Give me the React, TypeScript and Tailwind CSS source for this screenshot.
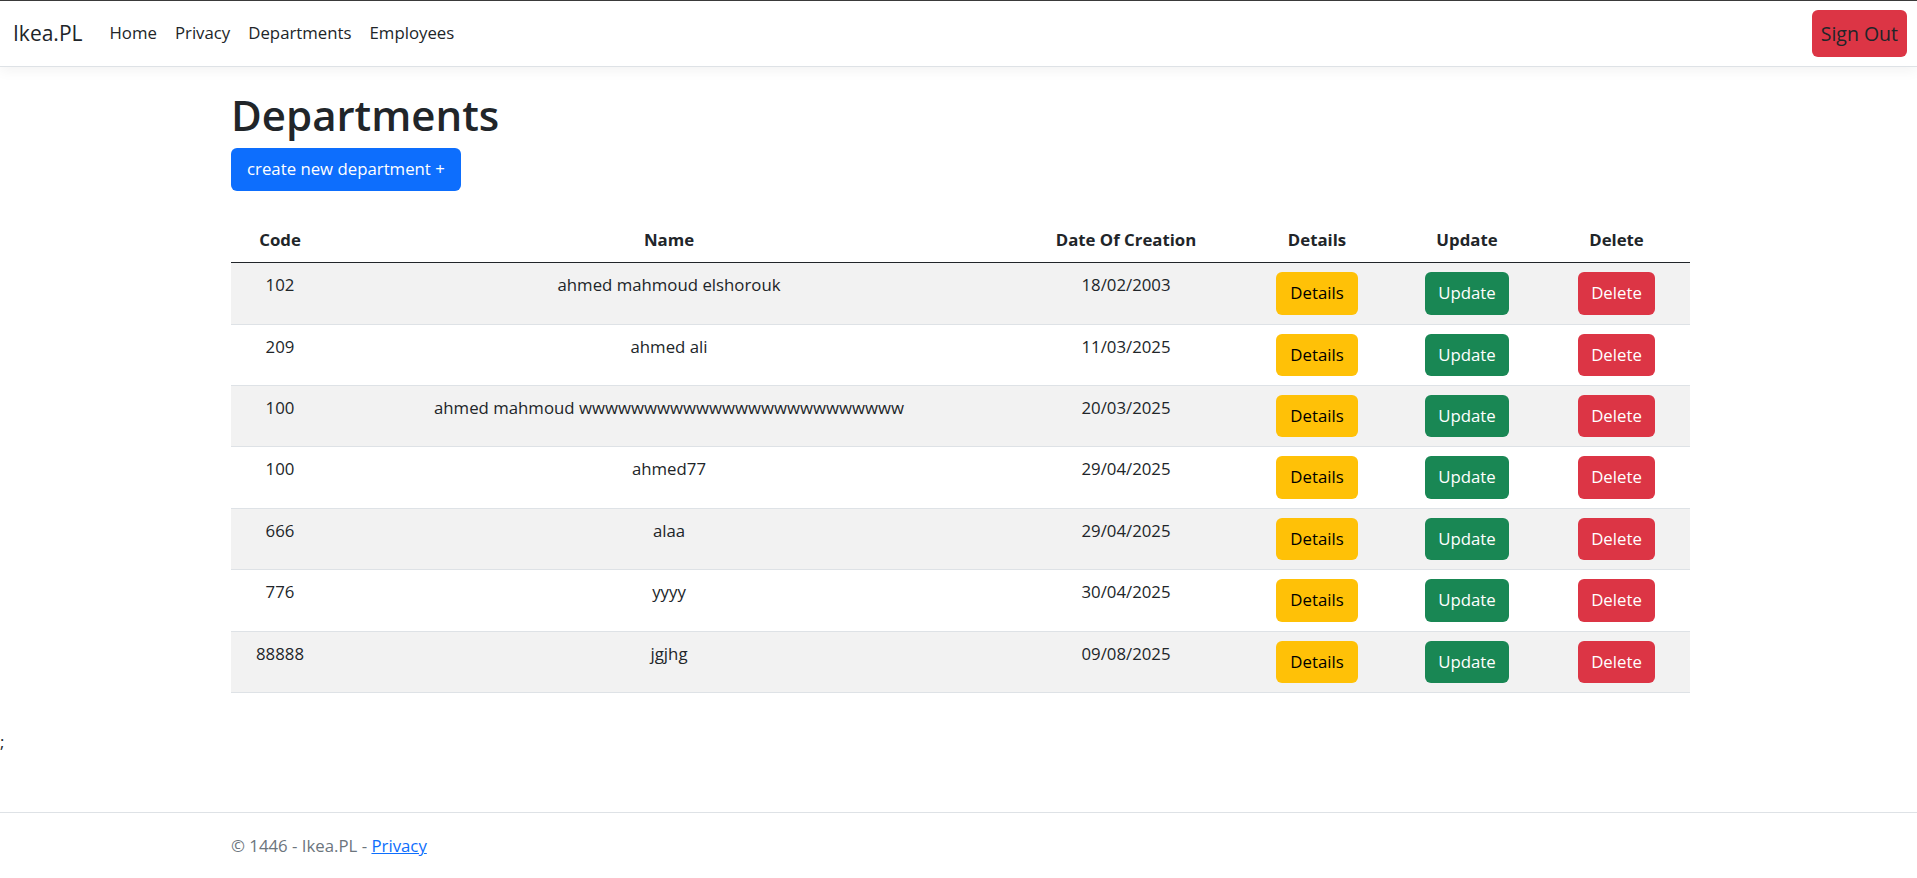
import { useState } from 'react'

type Department = {
  code: string
  name: string
  date: string
}

const departments: Department[] = [
  { code: '102', name: 'ahmed mahmoud elshorouk', date: '18/02/2003' },
  { code: '209', name: 'ahmed ali', date: '11/03/2025' },
  { code: '100', name: 'ahmed mahmoud wwwwwwwwwwwwwwwwwwwwwwwww', date: '20/03/2025' },
  { code: '100', name: 'ahmed77', date: '29/04/2025' },
  { code: '666', name: 'alaa', date: '29/04/2025' },
  { code: '776', name: 'yyyy', date: '30/04/2025' },
  { code: '88888', name: 'jgjhg', date: '09/08/2025' },
]

const links = ['Home', 'Privacy', 'Departments', 'Employees']

export default function App() {
  const [active, setActive] = useState('Departments')

  return (
    <div className="min-h-screen flex flex-col bg-white text-[#212529] text-[16.8px] leading-[26.4px] font-['Segoe_UI','Open_Sans','Noto_Sans',sans-serif]">
      {/* navbar */}
      <header className="h-[67px] border-t border-b border-t-[#3a3a3a] border-b-[#dee2e6] shadow-[0_4px_12px_rgba(0,0,0,0.05)] flex items-center justify-between pl-[13px] pr-[10px]">
        <div className="flex items-center">
          <a className="text-[21px] mr-[18px] cursor-pointer">Ikea.PL</a>
          <nav className="flex items-center">
            {links.map((link) => (
              <a
                key={link}
                onClick={() => setActive(link)}
                className={`px-[9px] cursor-pointer ${
                  active === link ? 'text-[#212529]' : 'text-[#212529]'
                }`}
              >
                {link}
              </a>
            ))}
          </nav>
        </div>
        <button className="h-[47px] px-[9px] rounded-[6px] bg-[#dc3545] text-[#212529] text-[19.5px] leading-none">
          Sign Out
        </button>
      </header>

      <main className="w-[1459px] ml-[231px]">
        <h1 className="mt-[22px] mb-[6px] text-[42px] leading-[52.8px] font-semibold">Departments</h1>
        <button className="h-[43px] px-[16px] rounded-[6px] bg-[#0d6efd] text-white">
          create new department +
        </button>

        <table className="mt-[27px] w-full table-fixed border-collapse">
          <colgroup>
            <col className="w-[98px]" />
            <col className="w-[680px]" />
            <col className="w-[234px]" />
            <col className="w-[148px]" />
            <col className="w-[152px]" />
            <col className="w-[147px]" />
          </colgroup>
          <thead>
            <tr className="border-b border-[#212529]">
              <th className="py-[9px] font-bold text-center">Code</th>
              <th className="py-[9px] font-bold text-center">Name</th>
              <th className="py-[9px] font-bold text-center">Date Of Creation</th>
              <th className="py-[9px] font-bold text-center">Details</th>
              <th className="py-[9px] font-bold text-center">Update</th>
              <th className="py-[9px] font-bold text-center">Delete</th>
            </tr>
          </thead>
          <tbody>
            {departments.map((d, i) => (
              <tr
                key={i}
                className={`border-b border-[#dee2e6] ${i % 2 === 0 ? 'bg-[#f2f2f2]' : 'bg-white'}`}
              >
                <td className="py-[9px] align-top text-center">{d.code}</td>
                <td className="py-[9px] align-top text-center">{d.name}</td>
                <td className="py-[9px] align-top text-center">{d.date}</td>
                <td className="py-[9px] align-top text-center">
                  <button className="h-[42.4px] px-[14px] rounded-[6px] bg-[#ffc107] text-black">
                    Details
                  </button>
                </td>
                <td className="py-[9px] align-top text-center">
                  <button className="h-[42.4px] px-[13px] rounded-[6px] bg-[#198754] text-white">
                    Update
                  </button>
                </td>
                <td className="py-[9px] align-top text-center">
                  <button className="h-[42.4px] px-[13px] rounded-[6px] bg-[#dc3545] text-white">
                    Delete
                  </button>
                </td>
              </tr>
            ))}
          </tbody>
        </table>
      </main>

      <div className="mt-[36px]">;</div>

      <footer className="mt-auto h-[66px] border-t border-[#dee2e6] text-[#6c757d] leading-[65px]">
        <div className="w-[1459px] ml-[231px]">
          © 1446 - Ikea.PL - <a className="text-[#0d6efd] underline cursor-pointer">Privacy</a>
        </div>
      </footer>
    </div>
  )
}
